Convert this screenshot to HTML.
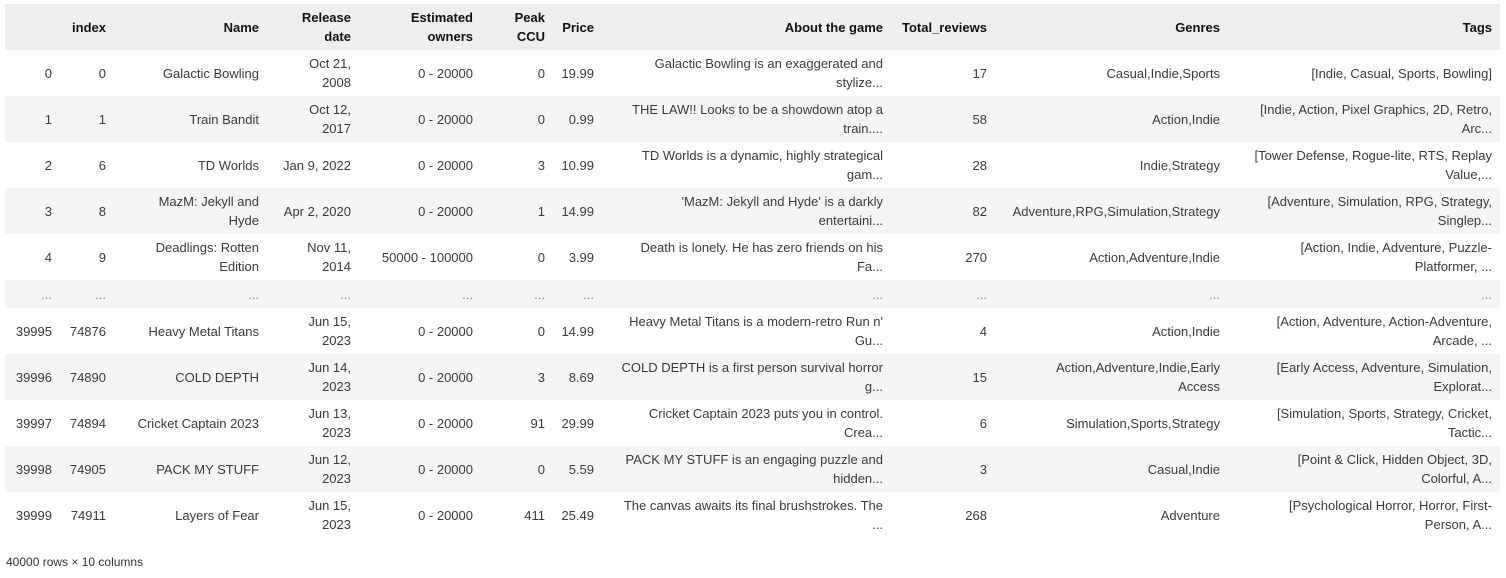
<!DOCTYPE html>
<html><head><meta charset="utf-8"><style>
body{margin:0;background:#fff;width:1506px;height:578px;overflow:hidden;font-family:"Liberation Sans",sans-serif;color:#3a3a3a;}
table{position:absolute;left:5px;top:4px;border-collapse:collapse;table-layout:fixed;width:1495px;font-size:13px;line-height:19px;}
th,td{text-align:right;vertical-align:middle;padding:0 8px 0 4px;white-space:nowrap;overflow:hidden;}
thead th{background:#eeeeee;height:46px;color:#111;font-weight:bold;}
tbody td{height:46px;}
tbody tr:nth-child(even) td{background:#f5f5f5;}
tr.dots td{height:28px;color:#888;}
.foot{position:absolute;left:6px;top:555px;font-size:12px;color:#333;}
</style></head><body>
<table>
<colgroup><col style="width:55px"><col style="width:54px"><col style="width:153px"><col style="width:92px"><col style="width:122px"><col style="width:72px"><col style="width:49px"><col style="width:289px"><col style="width:104px"><col style="width:233px"><col style="width:272px"></colgroup>
<thead><tr><th></th><th>index</th><th>Name</th><th>Release<br>date</th><th>Estimated<br>owners</th><th>Peak<br>CCU</th><th>Price</th><th>About the game</th><th>Total_reviews</th><th>Genres</th><th>Tags</th></tr></thead>
<tbody>
<tr><td>0</td><td>0</td><td>Galactic Bowling</td><td>Oct 21,<br>2008</td><td>0 - 20000</td><td>0</td><td>19.99</td><td>Galactic Bowling is an exaggerated and<br>stylize...</td><td>17</td><td>Casual,Indie,Sports</td><td>[Indie, Casual, Sports, Bowling]</td></tr>
<tr><td>1</td><td>1</td><td>Train Bandit</td><td>Oct 12,<br>2017</td><td>0 - 20000</td><td>0</td><td>0.99</td><td>THE LAW!! Looks to be a showdown atop a<br>train....</td><td>58</td><td>Action,Indie</td><td>[Indie, Action, Pixel Graphics, 2D, Retro,<br>Arc...</td></tr>
<tr><td>2</td><td>6</td><td>TD Worlds</td><td>Jan 9, 2022</td><td>0 - 20000</td><td>3</td><td>10.99</td><td>TD Worlds is a dynamic, highly strategical<br>gam...</td><td>28</td><td>Indie,Strategy</td><td>[Tower Defense, Rogue-lite, RTS, Replay<br>Value,...</td></tr>
<tr><td>3</td><td>8</td><td>MazM: Jekyll and<br>Hyde</td><td>Apr 2, 2020</td><td>0 - 20000</td><td>1</td><td>14.99</td><td>'MazM: Jekyll and Hyde' is a darkly<br>entertaini...</td><td>82</td><td>Adventure,RPG,Simulation,Strategy</td><td>[Adventure, Simulation, RPG, Strategy,<br>Singlep...</td></tr>
<tr><td>4</td><td>9</td><td>Deadlings: Rotten<br>Edition</td><td>Nov 11,<br>2014</td><td>50000 - 100000</td><td>0</td><td>3.99</td><td>Death is lonely. He has zero friends on his<br>Fa...</td><td>270</td><td>Action,Adventure,Indie</td><td>[Action, Indie, Adventure, Puzzle-<br>Platformer, ...</td></tr>
<tr class="dots"><td>...</td><td>...</td><td>...</td><td>...</td><td>...</td><td>...</td><td>...</td><td>...</td><td>...</td><td>...</td><td>...</td></tr>
<tr><td>39995</td><td>74876</td><td>Heavy Metal Titans</td><td>Jun 15,<br>2023</td><td>0 - 20000</td><td>0</td><td>14.99</td><td>Heavy Metal Titans is a modern-retro Run n'<br>Gu...</td><td>4</td><td>Action,Indie</td><td>[Action, Adventure, Action-Adventure,<br>Arcade, ...</td></tr>
<tr><td>39996</td><td>74890</td><td>COLD DEPTH</td><td>Jun 14,<br>2023</td><td>0 - 20000</td><td>3</td><td>8.69</td><td>COLD DEPTH is a first person survival horror<br>g...</td><td>15</td><td>Action,Adventure,Indie,Early<br>Access</td><td>[Early Access, Adventure, Simulation,<br>Explorat...</td></tr>
<tr><td>39997</td><td>74894</td><td>Cricket Captain 2023</td><td>Jun 13,<br>2023</td><td>0 - 20000</td><td>91</td><td>29.99</td><td>Cricket Captain 2023 puts you in control.<br>Crea...</td><td>6</td><td>Simulation,Sports,Strategy</td><td>[Simulation, Sports, Strategy, Cricket,<br>Tactic...</td></tr>
<tr><td>39998</td><td>74905</td><td>PACK MY STUFF</td><td>Jun 12,<br>2023</td><td>0 - 20000</td><td>0</td><td>5.59</td><td>PACK MY STUFF is an engaging puzzle and<br>hidden...</td><td>3</td><td>Casual,Indie</td><td>[Point &amp; Click, Hidden Object, 3D,<br>Colorful, A...</td></tr>
<tr><td>39999</td><td>74911</td><td>Layers of Fear</td><td>Jun 15,<br>2023</td><td>0 - 20000</td><td>411</td><td>25.49</td><td>The canvas awaits its final brushstrokes. The<br>...</td><td>268</td><td>Adventure</td><td>[Psychological Horror, Horror, First-<br>Person, A...</td></tr>
</tbody></table>
<div class="foot">40000 rows × 10 columns</div>
</body></html>
